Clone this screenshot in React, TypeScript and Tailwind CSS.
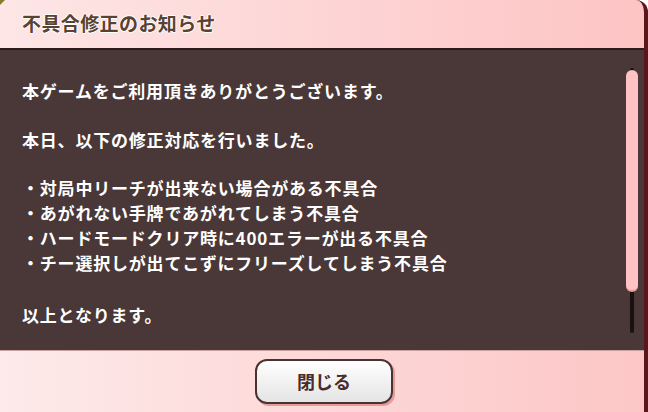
import React from "react";

const font = {
  fontFamily: '"Noto Sans CJK JP", "Noto Sans", sans-serif',
};

const bugs = [
  "対局中リーチが出来ない場合がある不具合",
  "あがれない手牌であがれてしまう不具合",
  "ハードモードクリア時に400エラーが出る不具合",
  "チー選択しが出てこずにフリーズしてしまう不具合",
];

export default function App() {
  return (
    <div
      className="relative w-[648px] h-[412px] flex flex-col overflow-hidden bg-[#4a3838] border-r-[4px] border-[#5a161a] rounded-tr-[12px]"
      style={font}
    >
      {/* corner ornament */}
      <div className="absolute left-0 top-0 w-0 h-0 border-t-[5px] border-r-[5px] border-t-[#8a7a2a] border-r-transparent" />

      {/* header */}
      <div className="h-[50px] shrink-0 flex items-center px-[22px] bg-gradient-to-r from-[#fde6e6] to-[#fdc4c4] border-b-[2px] border-[#2a1c1c]">
        <h1
          className="text-[19px] font-bold text-[#5a4232] tracking-[0.4px] -mt-[2px]"
          style={{
            textShadow:
              "1px 0 0 #fff, -1px 0 0 #fff, 0 1px 0 #fff, 0 -1px 0 #fff",
          }}
        >
          不具合修正のお知らせ
        </h1>
      </div>

      {/* body */}
      <div className="flex-1 flex flex-row">
        <div className="flex-1 pl-[22px] pt-[28px] text-white text-[17px] font-bold leading-[25px] tracking-[0.8px]">
          <p className="mb-[24px]">本ゲームをご利用頂きありがとうございます。</p>
          <p className="mb-[23px]">本日、以下の修正対応を行いました。</p>
          <ul className="mb-[27px]">
            {bugs.map((b) => (
              <li key={b}>・{b}</li>
            ))}
          </ul>
          <p>以上となります。</p>
        </div>
        <div className="w-[18px] pt-[18px] pr-[6px] flex justify-center">
          <div className="relative w-[4px] h-[265px] bg-[#1a1010] rounded-full">
            <div className="absolute left-[-4px] top-[2px] w-[12px] h-[222px] rounded-full bg-[#ffc2c2] border-b-[2px] border-[#e89c9c]" />
          </div>
        </div>
      </div>

      {/* footer */}
      <div className="h-[62px] shrink-0 flex items-center justify-center pl-[4px] bg-gradient-to-r from-[#fdeaea] to-[#fcc6c6] border-t border-[#c8a0a0]">
        <button className="w-[138px] h-[45px] rounded-[12px] border-[2px] border-[#4a3232] bg-gradient-to-b from-white to-[#e4e4e4] shadow-[2px_2px_0_#e89a9a] text-[18px] font-bold text-[#4a2c2c]">
          閉じる
        </button>
      </div>
    </div>
  );
}
